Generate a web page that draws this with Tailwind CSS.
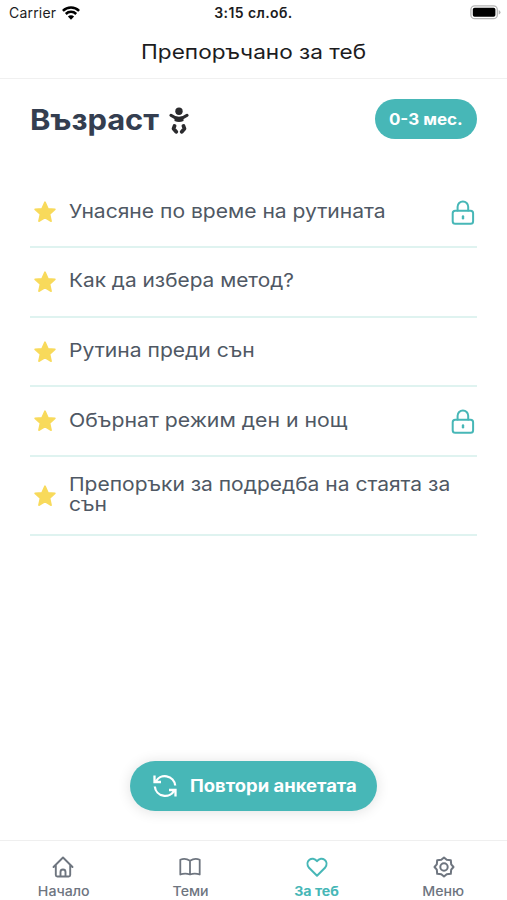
<!DOCTYPE html>
<html lang="bg">
<head>
<meta charset="utf-8">
<meta name="viewport" content="width=device-width, initial-scale=1">
<title>Препоръчано за теб</title>
<script src="https://cdn.jsdelivr.net/npm/@tailwindcss/browser@4"></script>
</head>
<body class="bg-white">
<svg class="hidden">
  <symbol id="star" viewBox="0 0 24 24"><path d="M12 2.200l2.900 6.500 7 .7-5.300 4.800 1.500 7-6.100-3.600-6.100 3.600 1.500-7L2.100 9.400l7-.7z" fill="#f8da5b" stroke="#f8da5b" stroke-width="1.600" stroke-linejoin="round"/></symbol>
  <symbol id="lock" viewBox="0 0 24 26"><g fill="none" stroke="#47b7b7" stroke-width="2" stroke-linecap="round"><rect x="1.700" y="10.800" width="20.400" height="13" rx="2.500"/><path d="M6.600 10.500V6.700a5.300 5.300 0 0 1 10.600 0v3.800"/><path d="M12 16.400v1.800" stroke-width="2.400"/></g></symbol>
</svg>
<div class="flex h-[900px] w-[507px] flex-col overflow-hidden font-['Inter','Noto_Sans',sans-serif] text-[#4f5864]">
  <header class="flex h-[79px] shrink-0 flex-col border-b border-[#f0f0f0] text-[#1c1c1e]">
    <div class="grid h-[26px] grid-cols-3 items-center pl-[9px] pr-[6px]">
      <div class="flex items-center gap-[6px] text-[14px]"><span class="tracking-[0.2px]">Carrier</span>
        <svg class="h-[14px] w-[18px]" viewBox="0 0 18 14"><g fill="none" stroke="#000" stroke-width="2.500"><path d="M.9 4.800a11.600 11.600 0 0 1 16.200 0"/><path d="M3.800 8a7.400 7.400 0 0 1 10.400 0"/></g><path d="M9 13.800l-3.100-3.200a4.400 4.400 0 0 1 6.200 0z"/></svg>
      </div>
      <div class="-ml-[3px] text-center text-[14px] font-semibold tracking-[0.4px] whitespace-nowrap">3:15 сл.об.</div>
      <div class="flex justify-end"><svg class="h-[15px] w-[31px]" viewBox="0 0 31 15"><rect x=".9" y=".9" width="26.400" height="12.800" rx="3.800" fill="#fff" stroke="#b5b5b5" stroke-width="1.300"/><rect x="2.800" y="2.800" width="22.600" height="9" rx="1.800"/><path d="M28.700 5v4.600q1.800-.7 1.800-2.300T28.700 5z" fill="#b5b5b5"/></svg></div>
    </div>
    <h1 class="flex h-[53px] items-center justify-center text-[20px] font-normal"><span class="inline-block scale-x-[1.13]">Препоръчано за теб</span></h1>
  </header>
  <main class="flex grow flex-col px-[30px]">
    <div class="mt-5 flex h-10 items-center justify-between">
      <h2 class="flex items-center gap-[18px] pt-0.5 text-[29px] font-bold text-[#343e50]"><span class="inline-block origin-left scale-x-[1.065]">Възраст</span>
        <svg class="h-[27px] w-[20px]" viewBox="0 0 20 27" fill="#2b2b2e"><circle cx="10" cy="4.200" r="3.700"/><path d="M1.900 8.300Q10 14.500 18.100 8.300" fill="none" stroke="#2b2b2e" stroke-width="3" stroke-linecap="round"/><path d="M5.500 10h9v4q-4.500 2-9 0z"/><path d="M5.500 19l-.9 2.700 2.600 3M14.500 19l.9 2.700-2.600 3" fill="none" stroke="#2b2b2e" stroke-width="3.800" stroke-linecap="round" stroke-linejoin="round"/></svg></h2>
      <div class="flex h-[40px] w-[102px] items-center justify-center rounded-full bg-[#47b7b7] text-[16px] font-bold text-white"><span class="inline-block scale-x-[1.06]">0-3 мес.</span></div>
    </div>
    <ul class="mt-[39px] text-[19px] leading-5">
      <li class="flex h-[70px] items-center border-b-2 border-[#dff3f0] pl-[3px] pr-[2px]"><svg class="mr-3 size-6"><use href="#star"/></svg><span class="mb-px inline-block origin-left scale-x-[1.108]">Унасяне по време на рутината</span><svg class="mt-0.5 ml-auto h-[26px] w-6"><use href="#lock"/></svg></li>
      <li class="flex h-[70px] items-center border-b-2 border-[#dff3f0] pl-[3px] pr-[2px]"><svg class="mr-3 size-6"><use href="#star"/></svg><span class="mb-0.5 inline-block origin-left scale-x-[1.097]">Как да избера метод?</span></li>
      <li class="flex h-[69px] items-center border-b-2 border-[#dff3f0] pl-[3px] pr-[2px]"><svg class="mr-3 size-6"><use href="#star"/></svg><span class="mb-0.5 inline-block origin-left scale-x-[1.11]">Рутина преди сън</span></li>
      <li class="flex h-[70px] items-center border-b-2 border-[#dff3f0] pl-[3px] pr-[2px]"><svg class="mr-3 size-6"><use href="#star"/></svg><span class="mb-px inline-block origin-left scale-x-[1.117]">Обърнат режим ден и нощ</span><svg class="mt-0.5 ml-auto h-[26px] w-6"><use href="#lock"/></svg></li>
      <li class="flex h-[79px] items-center border-b-2 border-[#dff3f0] pl-[3px] pr-[2px]"><svg class="mr-3 size-6"><use href="#star"/></svg><span class="mb-px inline-block origin-left scale-x-[1.105]">Препоръки за подредба на стаята за<br>сън</span></li>
    </ul>
    <button class="mx-auto mt-auto mb-[29px] flex h-[50px] w-[247px] items-center justify-start gap-[13px] rounded-full bg-[#47b7b7] pl-[23px] text-[17px] font-bold text-white shadow-[0_1px_14px_rgba(0,0,0,0.12)]">
      <svg class="size-6" viewBox="0 0 24 24" fill="none" stroke="#fff" stroke-width="2.300"><path d="M1.500 1.500v6.500H8M2.500 8A10.400 10.400 0 0 1 22.200 11.500M22.500 22.500v-6.500H16M21.500 16A10.400 10.400 0 0 1 1.800 12.500"/></svg><span class="mt-0.5 inline-block origin-left scale-x-[1.085]">Повтори анкетата</span></button>
  </main>
  <nav class="grid h-[60px] shrink-0 grid-cols-4 border-t border-[#efefef] text-[13px] leading-4 font-medium text-[#6e757f]">
    <div class="flex flex-col items-center gap-1 pt-[14px]"><svg class="size-6" viewBox="0 0 24 24" fill="none" stroke="currentColor" stroke-width="1.900" stroke-linejoin="round" stroke-linecap="round"><path d="M2.500 12L12 2.500l9.500 9.500M4.800 10v10q0 1.500 1.500 1.500h11.400q1.500 0 1.500-1.500V10M9.500 21v-4a2.500 2.500 0 0 1 5 0v4"/></svg><span class="inline-block scale-x-[1.09]">Начало</span></div>
    <div class="flex flex-col items-center gap-1 pt-[14px]"><svg class="size-6" viewBox="0 0 24 24" fill="none" stroke="currentColor" stroke-width="1.800" stroke-linejoin="round"><path d="M12 5.700Q7 2.500 2.300 4.800v14.700q5-1.800 9.700 0 4.700-1.800 9.700 0V4.800Q17 2.500 12 5.700zv13.800"/></svg><span class="inline-block scale-x-[1.09]">Теми</span></div>
    <div class="flex flex-col items-center gap-1 pt-[14px] font-bold text-[#47b7b7]"><svg class="size-6" viewBox="0 0 24 24" fill="none" stroke="currentColor" stroke-width="2" stroke-linejoin="round"><path d="M12 20.800l-8-8C-1 6.500 7.500 0 12 6.200c4.500-6.200 13 .3 8 6.600z"/></svg><span class="inline-block scale-x-[1.09]">За теб</span></div>
    <div class="flex flex-col items-center gap-1 pt-[14px]"><svg class="size-6" viewBox="0 0 24 24" fill="none" stroke="currentColor" stroke-width="2" stroke-linejoin="round"><circle cx="12" cy="12" r="3.700"/><path d="M12 2.500l2.700 2.300 4.100.4.400 4.100L21.500 12l-2.300 2.700-.4 4.100-4.100.4L12 21.500l-2.700-2.300-4.100-.4-.4-4.100L2.500 12l2.300-2.700.4-4.100 4.100-.4z"/></svg><span class="inline-block scale-x-[1.09]">Меню</span></div>
  </nav>
</div>
</body>
</html>
